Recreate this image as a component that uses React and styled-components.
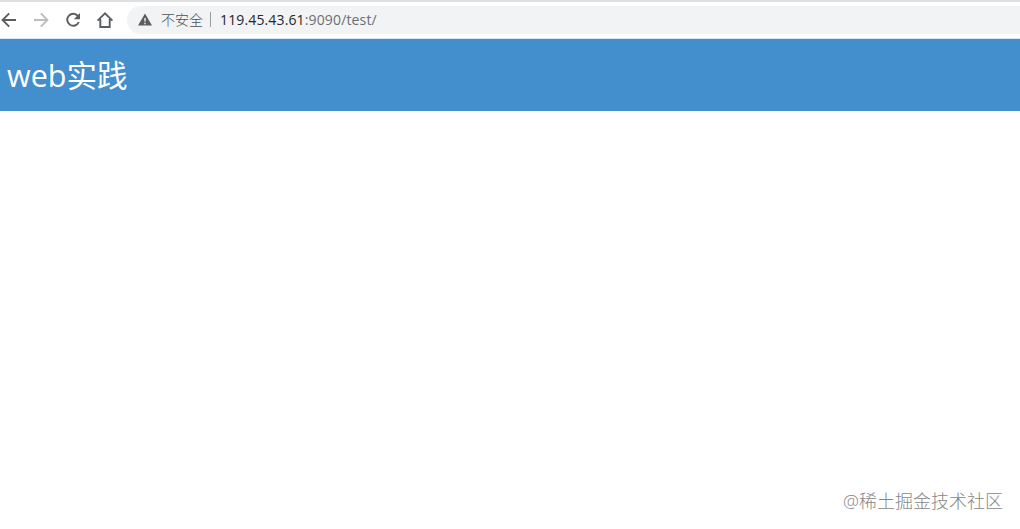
import React from 'react';
import styled, { createGlobalStyle } from 'styled-components';

const GlobalStyle = createGlobalStyle`
  * {
    box-sizing: border-box;
  }

  body {
    margin: 0;
    background: #fff;
    overflow: hidden;
  }
`;

const Page = styled.div`
  display: flex;
  flex-direction: column;
  height: 529px;
  font-family: 'Open Sans', 'Noto Sans CJK SC', sans-serif;
`;

const Toolbar = styled.header`
  display: flex;
  align-items: center;
  height: 39px;
  border-top: 2px solid #dedfe1;
  border-bottom: 1px solid #d3e9f5;
`;

const NavButtons = styled.nav`
  display: flex;
  flex: none;
  width: 127px;
  padding-left: 1px;
  gap: 16px;
`;

const NavIcon = styled.svg`
  display: block;
  width: 16px;
  height: 20px;
  overflow: visible;
  fill: none;
  stroke: ${(props) => (props.$disabled ? '#bbbdbf' : '#5b5e61')};
  stroke-width: 1.9;
`;

const AddressBar = styled.div`
  display: flex;
  flex: 1;
  align-items: center;
  height: 28px;
  padding: 0 0 1px 11px;
  border-radius: 14px 0 0 14px;
  background: #f1f3f4;
  font-size: 14px;
  line-height: 20px;
  white-space: nowrap;
`;

const WarningIcon = styled.svg`
  width: 14px;
  height: 13px;
  margin-right: 9px;
  fill: #5b5e61;
`;

const Insecure = styled.span`
  color: #4d5054;
  font-size: 14px;
  font-weight: 300;
`;

const Divider = styled.span`
  width: 1px;
  height: 15px;
  margin: 0 9px 0 7px;
  background: #9b9da0;
`;

const Url = styled.span`
  color: #6c6f73;
  letter-spacing: 0.14px;
`;

const Host = styled.span`
  color: #25272b;
`;

const Banner = styled.div`
  display: flex;
  align-items: center;
  height: 72px;
  padding: 0 7px 1px;
  background: #438ecc;
  color: #fff;
`;

const Title = styled.h1`
  margin: 0;
  font-size: 30.5px;
  font-weight: 400;
  line-height: 40px;
`;

const Content = styled.main`
  display: flex;
  flex: 1;
  align-items: flex-end;
  justify-content: flex-end;
  padding: 0 17px 15px;
`;

const Watermark = styled.span`
  color: #868686;
  font-size: 18px;
  font-weight: 300;
  line-height: 26px;
`;

export default function App() {
  return (
    <Page>
      <GlobalStyle />
      <Toolbar>
        <NavButtons>
          <NavIcon viewBox="0 0 16 20">
            <path d="M15 10H2M8.2 3.4L1.6 10l6.6 6.6" />
          </NavIcon>
          <NavIcon viewBox="0 0 16 20" $disabled>
            <path d="M1 10h13M7.8 3.4l6.6 6.6-6.6 6.6" />
          </NavIcon>
          <NavIcon viewBox="0 0 16 20">
            <path d="M13.2 6.4A6 6 0 1 0 13.8 12" />
            <path d="M15 3v6.2H8.8z" fill="#5b5e61" stroke="none" />
          </NavIcon>
          <NavIcon viewBox="0 0 16 20">
            <path d="M.6 10.6L8 3.4l7.4 7.2M3.3 9v8h9.4V9" />
          </NavIcon>
        </NavButtons>
        <AddressBar>
          <WarningIcon viewBox="0 0 14 13">
            <path fillRule="evenodd" d="M7 .4L0 12.6h14zM6.3 5h1.4v3.6H6.3zm0 4.8h1.4v1.4H6.3z" />
          </WarningIcon>
          <Insecure>不安全</Insecure>
          <Divider />
          <Url>
            <Host>119.45.43.61</Host>:9090/test/
          </Url>
        </AddressBar>
      </Toolbar>
      <Banner>
        <Title>web实践</Title>
      </Banner>
      <Content>
        <Watermark>@稀土掘金技术社区</Watermark>
      </Content>
    </Page>
  );
}
